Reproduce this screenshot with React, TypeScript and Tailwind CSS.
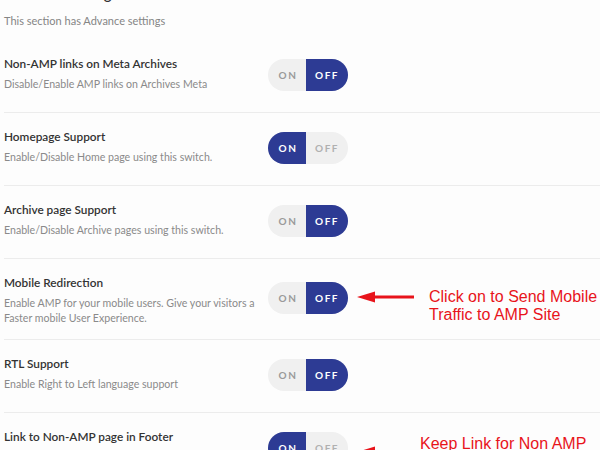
import React from "react";

type Setting = {
  title: string;
  desc: string;
  on: boolean;
};

const settings: Setting[] = [
  { title: "Non-AMP links on Meta Archives", desc: "Disable/Enable AMP links on Archives Meta", on: false },
  { title: "Homepage Support", desc: "Enable/Disable Home page using this switch.", on: true },
  { title: "Archive page Support", desc: "Enable/Disable Archive pages using this switch.", on: false },
  {
    title: "Mobile Redirection",
    desc: "Enable AMP for your mobile users. Give your visitors a Faster mobile User Experience.",
    on: false,
  },
  { title: "RTL Support", desc: "Enable Right to Left language support", on: false },
  { title: "Link to Non-AMP page in Footer", desc: "Enable link to the Non-AMP version of the page", on: true },
];

function Toggle({ on }: { on: boolean }) {
  return (
    <div className="h-[45px] pt-[5px]">
      <div className="flex h-[32px] w-[80px] overflow-hidden rounded-full bg-[#f0f0f0] text-[10px] font-bold tracking-[1.5px]">
        <span
          className={
            on
              ? "flex w-[38px] items-center justify-center bg-[#2d3b94] pl-[2px] text-white"
              : "flex w-[38px] items-center justify-center pl-[2px] text-[#9a9a9a]"
          }
        >
          ON
        </span>
        <span
          className={
            on
              ? "flex flex-1 items-center justify-center text-[#b0b0b0]"
              : "flex flex-1 items-center justify-center bg-[#2d3b94] text-white"
          }
        >
          OFF
        </span>
      </div>
    </div>
  );
}

function Arrow() {
  return (
    <svg width="60" height="14" viewBox="0 0 60 14">
      <polygon points="0,7 18,1.5 18,12.5" fill="#e8141b" />
      <rect x="16" y="5.5" width="41" height="3" fill="#e8141b" />
    </svg>
  );
}

export default function App() {
  return (
    <div
      className="relative h-[450px] w-[600px] overflow-hidden bg-[#fdfdfd]"
      style={{ fontFamily: "Lato, 'Noto Sans', sans-serif" }}
    >
      <div className="pl-[4px]">
        <h2 className="mt-[-17px] text-[15px] font-semibold leading-[20px] text-[#333]">Advance Settings</h2>
        <p className="mt-[10px] mb-[12px] text-[11px] leading-[15px] text-[#858585]">
          This section has Advance settings
        </p>

        {settings.map((s, i) => (
          <div
            key={s.title}
            className={
              i < settings.length - 1
                ? "flex items-center border-b border-[#ececec] pt-[14px] pb-[13px]"
                : "flex items-center pt-[14px] pb-[13px]"
            }
          >
            <div className="w-[264px] self-start">
              <div className="text-[11.8px] font-semibold leading-[20px] text-[#333]">{s.title}</div>
              <div className="mt-[3px] w-[260px] text-[10.6px] leading-[15px] text-[#8a8a8a]">{s.desc}</div>
            </div>
            <Toggle on={s.on} />
          </div>
        ))}
      </div>

      <div className="absolute left-[357px] top-[288px] flex items-start gap-[12px]">
        <div className="mt-[2px]">
          <Arrow />
        </div>
        <p
          className="text-[16px] leading-[18px] text-[#e8141b]"
          style={{ fontFamily: "'Liberation Sans', Arial, sans-serif" }}
        >
          Click on to Send Mobile
          <br />
          Traffic to AMP Site
        </p>
      </div>

      <div className="absolute left-[357px] top-[435px] flex items-start gap-[3px]">
        <div className="mt-[10px]">
          <Arrow />
        </div>
        <p
          className="whitespace-nowrap text-[16px] leading-[18px] text-[#e8141b]"
          style={{ fontFamily: "'Liberation Sans', Arial, sans-serif" }}
        >
          Keep Link for Non AMP
        </p>
      </div>
    </div>
  );
}
